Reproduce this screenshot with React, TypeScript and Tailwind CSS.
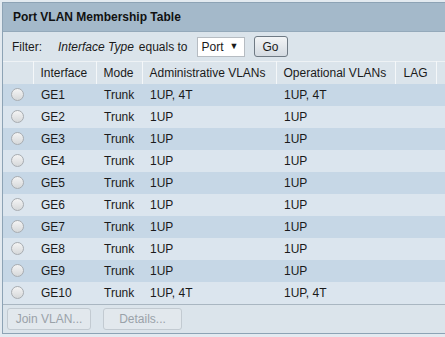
const ROWS = [
  { name: "GE1", admin: "1UP, 4T", oper: "1UP, 4T" },
  { name: "GE2", admin: "1UP", oper: "1UP" },
  { name: "GE3", admin: "1UP", oper: "1UP" },
  { name: "GE4", admin: "1UP", oper: "1UP" },
  { name: "GE5", admin: "1UP", oper: "1UP" },
  { name: "GE6", admin: "1UP", oper: "1UP" },
  { name: "GE7", admin: "1UP", oper: "1UP" },
  { name: "GE8", admin: "1UP", oper: "1UP" },
  { name: "GE9", admin: "1UP", oper: "1UP" },
  { name: "GE10", admin: "1UP, 4T", oper: "1UP, 4T" },
];

function Radio() {
  return (
    <span className="block h-[13px] w-[13px] rounded-full border border-[#a7acb1] bg-gradient-to-b from-[#f4f4f4] to-[#d6d8da]" />
  );
}

export default function App() {
  return (
    <div className="h-[337px] w-[445px] overflow-hidden bg-[#e3eaf0] pl-[2px] pt-[2px] font-['Liberation_Sans',Arial,sans-serif] text-[12px] text-[#1a1a1a]">
      <div className="w-[470px] border border-[#8da3b5] bg-[#dbe4eb]">
        <div className="flex h-[29px] items-center border-b border-[#94a9ba] bg-[#a4b9ca] pl-[10px] text-[12px] font-bold text-[#111]">
          Port VLAN Membership Table
        </div>

        <div className="flex h-[29px] items-center pl-[9px]">
          <span>Filter:</span>
          <span className="ml-[16px] italic">Interface Type</span>
          <span className="ml-[5px]">equals to</span>
          <div className="ml-[9px] flex h-[20px] w-[48px] items-center justify-between border border-[#b6bcc2] bg-white pl-[4px] pr-[5px]">
            <span>Port</span>
            <span className="text-[9px]">▼</span>
          </div>
          <button className="ml-[9px] flex h-[21px] w-[34px] items-center justify-center rounded-[3px] border border-[#6f7a84] bg-gradient-to-b from-[#f2f4f6] to-[#d4dbe2] text-[12px]">
            Go
          </button>
        </div>

        <table className="w-full border-collapse text-left">
          <thead>
            <tr className="h-[22px] border-t border-[#eef2f5] bg-[#dbe4eb]">
              <th className="w-[30px] border-r border-[#f4f7f9] p-0"></th>
              <th className="w-[63px] border-r border-[#f4f7f9] pl-[7px] font-normal">Interface</th>
              <th className="w-[46px] border-r border-[#f4f7f9] pl-[7px] font-normal">Mode</th>
              <th className="w-[134px] border-r border-[#f4f7f9] pl-[7px] font-normal">Administrative VLANs</th>
              <th className="w-[119px] border-r border-[#f4f7f9] pl-[7px] font-normal">Operational VLANs</th>
              <th className="w-[41px] border-r border-[#f4f7f9] pl-[8px] font-normal">LAG</th>
              <th className="p-0 font-normal"></th>
            </tr>
          </thead>
          <tbody>
            {ROWS.map((row, i) => (
              <tr key={row.name} className={`h-[22px] ${i % 2 === 0 ? "bg-[#c6d7e6]" : "bg-[#dbe5ee]"}`}>
                <td className="p-0 pl-[8px]">
                  <Radio />
                </td>
                <td className="pl-[8px]">{row.name}</td>
                <td className="pl-[8px]">Trunk</td>
                <td className="pl-[8px]">{row.admin}</td>
                <td className="pl-[8px]">{row.oper}</td>
                <td></td>
                <td></td>
              </tr>
            ))}
          </tbody>
        </table>

        <div className="flex h-[29px] items-center gap-[12px] border-t border-[#a9b6c1] pl-[4px]">
          <button className="h-[22px] w-[84px] rounded-[3px] border border-[#c2cad1] bg-[#e2e8ed] text-[12px] text-[#9aa2a9]">
            Join VLAN...
          </button>
          <button className="h-[22px] w-[79px] rounded-[3px] border border-[#c2cad1] bg-[#e2e8ed] text-[12px] text-[#9aa2a9]">
            Details...
          </button>
        </div>
      </div>
    </div>
  );
}
